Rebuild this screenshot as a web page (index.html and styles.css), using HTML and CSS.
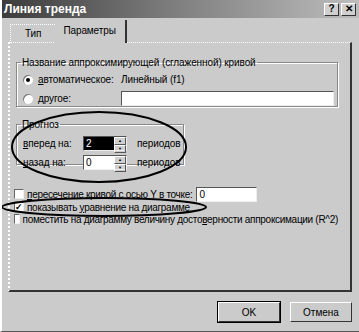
FILE: index.html
```html
<!DOCTYPE html>
<html lang="ru">
<head>
    <meta charset="UTF-8">
    <title>Линия тренда</title>
    <link rel="stylesheet" href="styles.css">
</head>
<body>
    <div class="dialog">
        <div class="titlebar">
            <span class="title">Линия тренда</span>
            <div class="title-buttons">
                <span class="tbtn">?</span>
                <span class="tbtn">✕</span>
            </div>
        </div>

        <div class="tabs">
            <div class="tab">Тип</div>
            <div class="tab active">Параметры</div>
        </div>

        <div class="panel">
            <fieldset class="group group-name">
                <legend>Название аппроксимирующей (сглаженной) кривой</legend>
                <div class="row">
                    <span class="radio checked"></span>
                    <span class="lbl lbl-radio"><u>а</u>втоматическое:</span>
                    <span class="auto-name">Линейный (f1)</span>
                </div>
                <div class="row">
                    <span class="radio"></span>
                    <span class="lbl lbl-radio"><u>д</u>ругое:</span>
                    <span class="textbox wide"></span>
                </div>
            </fieldset>

            <fieldset class="group group-forecast">
                <legend>Прогноз</legend>
                <div class="row">
                    <span class="lbl lbl-spin"><u>в</u>перед на:</span>
                    <span class="spin"><span class="spin-value selected">2</span><span class="spin-arrows"><i>▲</i><i>▼</i></span></span>
                    <span class="lbl">периодов</span>
                </div>
                <div class="row">
                    <span class="lbl lbl-spin"><u>н</u>азад на:</span>
                    <span class="spin"><span class="spin-value">0</span><span class="spin-arrows"><i>▲</i><i>▼</i></span></span>
                    <span class="lbl">периодов</span>
                </div>
            </fieldset>

            <div class="checks">
                <div class="row">
                    <span class="check"></span>
                    <span class="lbl"><u>п</u>ересечение кривой с осью Y в точке:</span>
                    <span class="textbox small">0</span>
                </div>
                <div class="row">
                    <span class="check checked">✓</span>
                    <span class="lbl">показывать <u>у</u>равнение на диаграмме</span>
                </div>
                <div class="row">
                    <span class="check"></span>
                    <span class="lbl">поместить на диаграмму величину досто<u>в</u>ерности аппроксимации (R^2)</span>
                </div>
            </div>
        </div>

        <div class="footer">
            <button class="btn default">OK</button>
            <button class="btn">Отмена</button>
        </div>

        <!-- hand-drawn marks over the screenshot -->
        <svg class="marks" width="359" height="332" viewBox="0 0 359 332">
            <ellipse cx="99" cy="147" rx="87" ry="35" />
            <ellipse cx="104" cy="207" rx="102" ry="9" />
        </svg>
    </div>
</body>
</html>
```

FILE: styles.css
```css
body {
    margin: 0;
    font-family: "Liberation Sans", Arial, sans-serif;
    font-size: 10px;
    letter-spacing: -0.1px;
    color: #000;
}

.dialog {
    position: relative;
    width: 359px;
    height: 332px;
    box-sizing: border-box;
    background: #cbcbcb;
    border-left: 2px solid #fff;
    border-bottom: 1px solid #555;
    overflow: hidden;
}

.titlebar {
    display: flex;
    align-items: center;
    justify-content: space-between;
    height: 18px;
    padding: 0 3px 0 2px;
    background: linear-gradient(to right, #3c3c3c 0%, #7a7a7a 45%, #bdbdbd 100%);
}

.title {
    color: #fff;
    font-weight: bold;
    font-size: 12px;
    letter-spacing: 0;
}

.title-buttons {
    display: flex;
    gap: 2px;
}

.tbtn {
    display: flex;
    align-items: center;
    justify-content: center;
    width: 13px;
    height: 11px;
    background: #d0d0d0;
    border: 1px solid;
    border-color: #fff #333 #333 #fff;
    font-size: 10px;
    font-weight: bold;
    line-height: 1;
}

.tabs {
    display: flex;
    align-items: flex-end;
    height: 25px;
    margin: 0 0 -1px 8px;
}

.tab {
    padding: 0 14px;
    height: 18px;
    line-height: 18px;
    border: 1px dotted #fff;
    border-bottom: none;
    border-right: none;
}

.tab.active {
    position: relative;
    height: 23px;
    line-height: 22px;
    padding: 0 9px 0 8px;
    border: none;
    border-right: 2px solid #333;
    background: #cbcbcb;
}

.panel {
    margin: 0 7px 0 6px;
    height: 250px;
    box-sizing: border-box;
    border-top: 1px dotted #fff;
    border-left: 2px dotted #fff;
    border-right: 2px solid #333;
    border-bottom: 2px solid #333;
    padding: 14px 12px 0 6px;
}

.group {
    margin: 0;
    border: 1px solid #888;
    box-shadow: inset 1px 1px 0 #fff, 1px 1px 0 #fff;
    padding: 0 0 0 6px;
}

.group legend {
    padding: 0 1px;
    margin-left: -2px;
}

.group-name {
    height: 46px;
    padding-top: 2px;
}

.group-forecast {
    width: 168px;
    height: 46px;
    box-sizing: border-box;
    margin-top: 12px;
    padding-top: 4px;
}

.row {
    display: flex;
    align-items: center;
    height: 19px;
}

.radio {
    width: 10px;
    height: 10px;
    border-radius: 50%;
    background: #fff;
    box-shadow: inset 1px 1px 0 #777;
    margin-right: 5px;
    position: relative;
}

.radio.checked::after {
    content: "";
    position: absolute;
    left: 3px;
    top: 3px;
    width: 4px;
    height: 4px;
    border-radius: 50%;
    background: #000;
}

.lbl-radio {
    width: 83px;
}

.lbl-spin {
    width: 60px;
}

.textbox {
    box-sizing: border-box;
    height: 15px;
    background: #fff;
    border: 1px solid;
    border-color: #555 #eee #eee #555;
    padding-left: 2px;
    line-height: 13px;
}

.textbox.wide {
    width: 213px;
}

.textbox.small {
    width: 61px;
    margin-left: 4px;
}

.spin {
    display: flex;
    width: 44px;
    height: 15px;
    box-sizing: border-box;
    border: 1px solid;
    border-color: #555 #eee #eee #555;
    background: #fff;
    margin-right: 10px;
}

.spin-value {
    flex: 1;
    padding-left: 2px;
    line-height: 13px;
}

.spin-value.selected {
    background: #000;
    color: #fff;
}

.spin-arrows {
    display: flex;
    flex-direction: column;
    width: 12px;
    background: #d0d0d0;
}

.spin-arrows i {
    flex: 1;
    font-style: normal;
    font-size: 4px;
    line-height: 6px;
    text-align: center;
    border: 1px solid;
    border-color: #fff #555 #555 #fff;
}

.checks {
    margin-top: 22px;
    margin-left: -2px;
}

.checks .row {
    height: 12px;
}

.checks .row:first-child {
    height: 14px;
}

.check {
    box-sizing: border-box;
    width: 10px;
    height: 10px;
    background: #fff;
    border: 1px solid;
    border-color: #666 #eee #eee #666;
    margin-right: 3px;
    font-size: 9px;
    line-height: 8px;
    text-align: center;
    font-weight: bold;
}

.checks .lbl {
    white-space: nowrap;
    letter-spacing: -0.3px;
}

.footer {
    display: flex;
    justify-content: flex-end;
    gap: 10px;
    padding: 10px 7px 0 0;
}

.btn {
    width: 62px;
    height: 20px;
    background: #cbcbcb;
    font-family: inherit;
    font-size: 10px;
    border: 1px solid;
    border-color: #fff #333 #333 #fff;
    padding: 0;
}

.btn.default {
    outline: 1px solid #000;
}

.marks {
    position: absolute;
    left: -2px;
    top: 0;
    pointer-events: none;
}

.marks ellipse {
    fill: none;
    stroke: #000;
    stroke-width: 2;
}
```
